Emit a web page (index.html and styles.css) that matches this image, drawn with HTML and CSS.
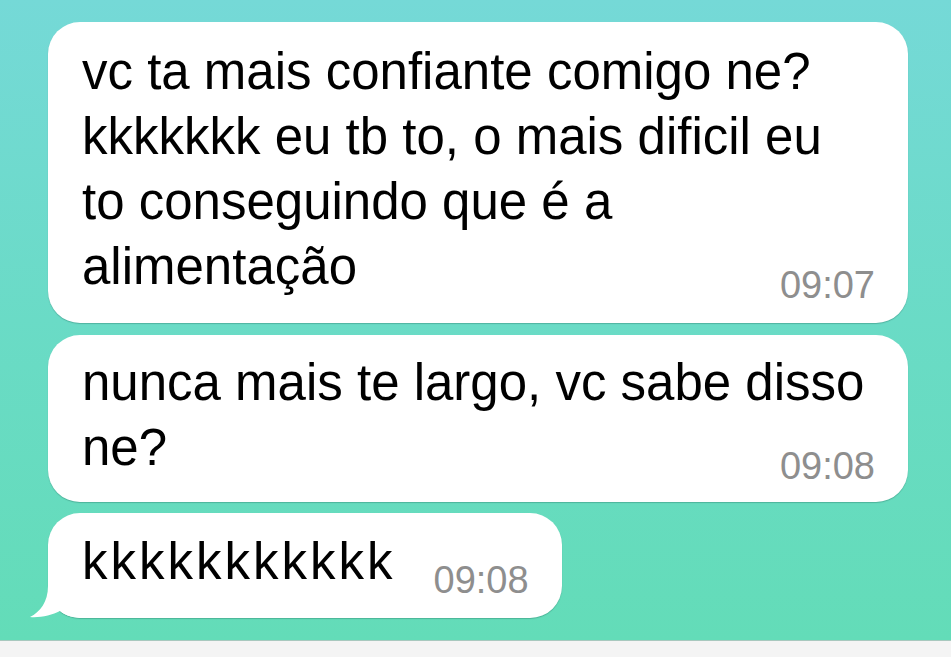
FILE: index.html
```html
<!DOCTYPE html>
<html lang="pt">
<head>
<meta charset="utf-8">
<title>Chat</title>
<link rel="stylesheet" href="styles.css">
</head>
<body>
<div class="screen">
  <div class="chat">
    <div class="bubble">vc ta mais confiante comigo ne? kkkkkkk eu tb to, o mais dificil eu to conseguindo que é a alimentação<span class="time">09:07</span></div>
    <div class="bubble bubble-mid">nunca mais te largo, vc sabe disso ne?<span class="time">09:08</span></div>
    <div class="bubble bubble-short"><span class="laugh">kkkkkkkkkkk</span><span class="time">09:08</span><svg class="tail" width="55" height="40" viewBox="0 0 55 40"><path d="M18 0 L18 8 C18 24 10 34 0 39 C10 40 22 37 30 33 C36 38 44 40 55 40 L55 0 Z" fill="#ffffff"/></svg></div>
  </div>
  <div class="bar"></div>
</div>
</body>
</html>
```
FILE: styles.css
```css
html, body {
  margin: 0;
  padding: 0;
}
body {
  width: 951px;
  height: 657px;
  overflow: hidden;
  font-family: "Liberation Sans", Arial, sans-serif;
}
.screen {
  display: flex;
  flex-direction: column;
  height: 657px;
}
.chat {
  height: 640px;
  box-sizing: border-box;
  padding: 22px 43px 0 48px;
  background: linear-gradient(180deg, #75d9d7 0%, #6adbc6 50%, #63dcb8 100%);
  display: flex;
  flex-direction: column;
  align-items: flex-start;
  gap: 12px;
}
.bubble {
  position: relative;
  width: 860px;
  box-sizing: border-box;
  background: #ffffff;
  border-radius: 32px;
  padding: 17px 33px 24px 34px;
  font-size: 51px;
  line-height: 65px;
  color: #000;
  box-shadow: 0 1px 1px rgba(0, 60, 50, 0.25);
}
.bubble-mid {
  padding: 15px 33px 22px 34px;
}
.bubble-short {
  width: auto;
  margin-top: -1px;
  padding: 16px 33px 24px 34px;
}
.laugh {
  letter-spacing: 3px;
}
.time {
  float: right;
  position: relative;
  top: 32px;
  margin-left: 38px;
  font-size: 38px;
  line-height: 38px;
  color: #8e8e8e;
}
.tail {
  position: absolute;
  left: -18px;
  bottom: 0;
  display: block;
}
.bar {
  flex: 1;
  background: #f4f4f4;
  border-top: 1px solid #a8c8be;
}
```
